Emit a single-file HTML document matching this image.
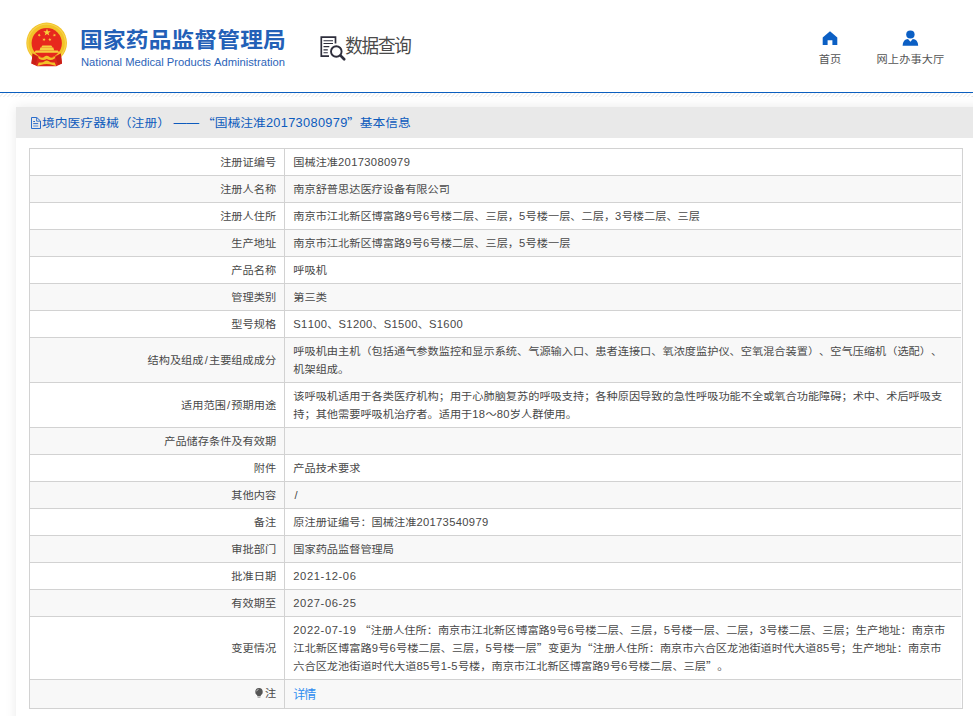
<!DOCTYPE html>
<html lang="zh-CN">
<head>
<meta charset="utf-8">
<title>国家药品监督管理局 数据查询</title>
<style>
*{box-sizing:border-box;margin:0;padding:0}
html,body{width:973px;height:716px;overflow:hidden;background:#fff}
body{text-spacing-trim:space-all;font-kerning:none;font-family:"Liberation Sans","Noto Sans CJK SC",sans-serif;color:#333;font-size:11.2px;position:relative}
.hdr{position:absolute;left:0;top:0;width:973px;height:92px;background:#fff}
.logo{position:absolute;left:25px;top:22px;width:44.5px;height:47.5px}
.t1{position:absolute;left:80px;top:22px;font-size:22.7px;font-weight:700;color:#2360b7;line-height:34px;white-space:nowrap;letter-spacing:.2px;transform:scaleY(.925);transform-origin:0 79%}
.t2{position:absolute;left:81px;top:54.5px;font-size:11.2px;color:#2c64b8;line-height:14px;white-space:nowrap}
.q{position:absolute;left:345.3px;top:34.5px;font-size:17.6px;color:#4a4a4a;line-height:24px;white-space:nowrap;letter-spacing:-1.3px;transform:scaleY(1.07);transform-origin:0 50%}
.qi{position:absolute;left:319.8px;top:35.8px;width:28px;height:26px}
.nav{position:absolute;top:51.4px;letter-spacing:.12px;font-size:11.2px;color:#555;line-height:16px;white-space:nowrap;text-align:center;transform:scaleY(.92);transform-origin:0 82%}
.ni{position:absolute}
.bl{position:absolute;left:0;top:92px;width:973px;height:1.4px;background:#0b5fbf}
.hatch{position:absolute;left:0;top:93.2px;width:973px;height:3.9px;
 background:repeating-linear-gradient(135deg,#fff 0,#fff 2.13px,#e4e4e4 2.13px,#e4e4e4 2.83px) -0.6px 0}
.panel{position:absolute;left:16px;top:107px;width:1000px;height:640px;background:#fff;box-shadow:0 0 11px rgba(0,0,0,.085)}
.ph{height:31px;background:#e9e9e9;color:#0d5bbd;font-size:12.8px;line-height:31px;padding-left:26px;white-space:nowrap;position:relative}
.ph .s2{display:inline-block;transform:scaleY(.93);transform-origin:50% 66%}
.ph .n{letter-spacing:.025em}
.ph .cq{margin-left:-.8px}
.ph svg{position:absolute;left:15px;top:10px}
table{position:absolute;left:13px;top:41px;width:934px;border-collapse:collapse;table-layout:fixed}
td{border:1px solid #d2d2d2;padding:4px 6px 4px 8.3px;line-height:18px;font-size:11.2px;vertical-align:middle;color:#484848}
td.k{width:255px;text-align:right;padding:4px 7.9px 4px 8px}
tr:last-child td.k .s{position:relative;top:-.8px}
tr:nth-child(even) td{background:#f8f8f8}
.cq{font-family:"Noto Sans CJK SC",sans-serif;line-height:0}
.sl{padding:0 1.2px}
.n{letter-spacing:.03em}
.d{letter-spacing:.053em}
.s{display:block;height:18px;white-space:nowrap;transform:scaleY(.9);transform-origin:50% 62%}
.bulb{display:inline-block;width:8px;height:11.4px;vertical-align:-1.5px;margin-right:2.4px}
a{color:#2d8cf0;text-decoration:none;font-size:12px;letter-spacing:-1px;line-height:20px;display:inline-block;position:relative;top:.8px}
</style>
</head>
<body>
<div class="hdr">
 <svg class="logo" viewBox="0 0 44 47">
  <circle cx="21.4" cy="20.7" r="20.1" fill="#f2c229"/>
  <circle cx="21.4" cy="20.7" r="18.6" fill="none" stroke="#f7d44a" stroke-width="1.2"/>
  <circle cx="21.5" cy="20.9" r="15" fill="#e7281d"/>
  <polygon points="21.75,6.40 22.67,9.04 25.46,9.09 23.23,10.78 24.04,13.46 21.75,11.86 19.46,13.46 20.27,10.78 18.04,9.09 20.83,9.04" fill="#f7d23c"/>
  <polygon points="14.70,11.36 14.68,12.61 15.85,13.06 14.65,13.43 14.58,14.68 13.86,13.66 12.65,13.98 13.40,12.98 12.72,11.92 13.91,12.33" fill="#f7d23c"/>
  <polygon points="28.45,11.36 29.24,12.33 30.43,11.92 29.75,12.98 30.50,13.98 29.29,13.66 28.57,14.68 28.50,13.43 27.30,13.06 28.47,12.61" fill="#f7d23c"/>
  <polygon points="19.00,15.68 19.20,16.91 20.43,17.16 19.32,17.73 19.47,18.97 18.58,18.09 17.44,18.62 18.01,17.50 17.15,16.58 18.39,16.77" fill="#f7d23c"/>
  <polygon points="24.35,15.68 24.96,16.77 26.20,16.58 25.34,17.50 25.91,18.62 24.77,18.09 23.88,18.97 24.03,17.73 22.92,17.16 24.15,16.91" fill="#f7d23c"/>
  <path d="M17.2 23.3 h8.8 l1.2 1.7 h-11.2 z M15.2 25.3 h12.8 l0.8 2.6 h-14.4 z M10.6 28.3 h21.8 l1.8 2.2 h-25.4 z" fill="#f6cf40"/>
  <path d="M7.6 31.2 Q21.5 39.5 35.4 31.2 L36.6 41 L31 43.8 H12 L6.3 41 Z" fill="#dc261c"/>
  <path d="M7.6 31.2 L6.3 41 L10.5 42.5 L12.5 35 Z M35.4 31.2 L36.6 41 L32.5 42.5 L30.5 35 Z" fill="#c91f17"/>
  <path d="M12.6 33.6 Q17 36.6 19 34.4 Q21.5 32.4 24 34.4 Q26 36.6 30.4 33.6 L29.2 36.4 Q25 38.8 21.5 36.6 Q18 38.8 13.8 36.4 Z" fill="#f2c229"/>
  <path d="M12.2 43.6 L13.6 40 Q17.6 40.6 19.4 38.8 Q21.5 37.4 23.6 38.8 Q25.4 40.6 29.4 40 L30.8 43.6 L27.5 42.6 Q21.5 40.4 15.5 42.6 Z" fill="#f2c229"/>
 </svg>
 <div class="t1">国家药品监督管理局</div>
 <div class="t2">National Medical Products Administration</div>
 <svg class="qi" viewBox="0 0 28 26" fill="none" stroke="#2e2e3c" stroke-width="1.7">
  <path d="M9 20.2 H1.3 V1.1 H15.5 V7.6"/>
  <path d="M3.5 4.7 H13 M3.5 7.5 H13 M3.5 10.6 H9.3 M3.5 13.8 H7.8 M3.5 16.7 H7.8" stroke-width="1.15"/>
  <circle cx="16.3" cy="15.5" r="5.3" stroke-width="1.9"/>
  <path d="M20.6 19.6 L24.2 23.3" stroke-width="2.7" stroke-linecap="round"/>
 </svg>
 <div class="q">数据查询</div>

 <svg class="ni" style="left:822px;top:30.5px" width="16" height="14.5" viewBox="0 0 16 15" preserveAspectRatio="none">
  <path d="M8 0.3 L15.3 6.8 V14.8 H10.4 V9.6 H5.6 V14.8 H0.7 V6.8 Z" fill="#0b5fc4"/>
 </svg>
 <div class="nav" style="left:800px;width:60px">首页</div>
 <svg class="ni" style="left:902px;top:29.7px" width="17" height="16.3" viewBox="0 0 17 17" preserveAspectRatio="none">
  <circle cx="8.4" cy="4.6" r="4.2" fill="#0b5fc4"/>
  <path d="M0.6 16.4 Q1 9.6 6 9.4 L8.4 12.3 L10.8 9.4 Q15.8 9.6 16.2 16.4 Z" fill="#0b5fc4"/>
 </svg>
 <div class="nav" style="left:870px;width:81px">网上办事大厅</div>
</div>
<div class="bl"></div>
<div class="hatch"></div>

<div class="panel">
 <div class="ph">
  <svg width="10" height="12" viewBox="0 0 10 12" fill="none" stroke="#2a6dcc" stroke-width="1"><path d="M0.5 0.5 H5.8 L9.5 4 V11.5 H0.5 Z"/><path d="M5.6 0.8 V4.2 H9.2" stroke-width=".9"/><path d="M2.2 4.5 H4 M2.2 6.6 H7.2"/><path d="M2.2 9 H7.2" stroke-width="1.6" stroke="#8fb0e0"/></svg>
  <span class="s2">境内医疗器械（注册） —— <span class="cq">“</span>国械注准<span class="n">20173080979</span><span class="cq">”</span>基本信息</span>
 </div>
 <table>
  <tr><td class="k"><span class="s">注册证编号</span></td><td><span class="s">国械注准<span class="n">20173080979</span></span></td></tr>
  <tr><td class="k"><span class="s">注册人名称</span></td><td><span class="s">南京舒普思达医疗设备有限公司</span></td></tr>
  <tr><td class="k"><span class="s">注册人住所</span></td><td><span class="s">南京市江北新区博富路<span class="n">9</span>号<span class="n">6</span>号楼二层、三层，<span class="n">5</span>号楼一层、二层，<span class="n">3</span>号楼二层、三层</span></td></tr>
  <tr><td class="k"><span class="s">生产地址</span></td><td><span class="s">南京市江北新区博富路<span class="n">9</span>号<span class="n">6</span>号楼二层、三层，<span class="n">5</span>号楼一层</span></td></tr>
  <tr><td class="k"><span class="s">产品名称</span></td><td><span class="s">呼吸机</span></td></tr>
  <tr><td class="k"><span class="s">管理类别</span></td><td><span class="s">第三类</span></td></tr>
  <tr><td class="k"><span class="s">型号规格</span></td><td><span class="s"><span class="n">S1100</span>、<span class="n">S1200</span>、<span class="n">S1500</span>、<span class="n">S1600</span></span></td></tr>
  <tr><td class="k"><span class="s">结构及组成<span class="sl">/</span>主要组成成分</span></td><td><span class="s">呼吸机由主机（包括通气参数监控和显示系统、气源输入口、患者连接口、氧浓度监护仪、空氧混合装置）、空气压缩机（选配）、</span><span class="s">机架组成。</span></td></tr>
  <tr><td class="k"><span class="s">适用范围<span class="sl">/</span>预期用途</span></td><td><span class="s">该呼吸机适用于各类医疗机构；用于心肺脑复苏的呼吸支持；各种原因导致的急性呼吸功能不全或氧合功能障碍；术中、术后呼吸支</span><span class="s">持；其他需要呼吸机治疗者。适用于<span class="n">18</span>～<span class="n">80</span>岁人群使用。</span></td></tr>
  <tr><td class="k"><span class="s">产品储存条件及有效期</span></td><td><span class="s"></span></td></tr>
  <tr><td class="k"><span class="s">附件</span></td><td><span class="s">产品技术要求</span></td></tr>
  <tr><td class="k"><span class="s">其他内容</span></td><td><span class="s"><span class="sl">/</span></span></td></tr>
  <tr><td class="k"><span class="s">备注</span></td><td><span class="s">原注册证编号：国械注准<span class="n">20173540979</span></span></td></tr>
  <tr><td class="k"><span class="s">审批部门</span></td><td><span class="s">国家药品监督管理局</span></td></tr>
  <tr><td class="k"><span class="s">批准日期</span></td><td><span class="s"><span class="n d">2021-12-06</span></span></td></tr>
  <tr><td class="k"><span class="s">有效期至</span></td><td><span class="s"><span class="n d">2027-06-25</span></span></td></tr>
  <tr><td class="k"><span class="s">变更情况</span></td><td><span class="s"><span class="n d">2022-07-19</span> <span class="cq">“</span>注册人住所：南京市江北新区博富路<span class="n">9</span>号<span class="n">6</span>号楼二层、三层，<span class="n">5</span>号楼一层、二层，<span class="n">3</span>号楼二层、三层；生产地址：南京市</span><span class="s">江北新区博富路<span class="n">9</span>号<span class="n">6</span>号楼二层、三层，<span class="n">5</span>号楼一层<span class="cq">”</span>变更为<span class="cq">“</span>注册人住所：南京市六合区龙池街道时代大道<span class="n">85</span>号；生产地址：南京市</span><span class="s">六合区龙池街道时代大道<span class="n">85</span>号<span class="n">1-5</span>号楼，南京市江北新区博富路<span class="n">9</span>号<span class="n">6</span>号楼二层、三层<span class="cq">”</span>。</span></td></tr>
  <tr><td class="k"><span class="s"><svg class="bulb" viewBox="0 0 8 10" preserveAspectRatio="none"><circle cx="4" cy="3.8" r="3.7" fill="#555"/><path d="M2.2 6.2 H5.8 V8.2 H2.2 Z" fill="#555"/><path d="M2.6 8.8 H5.4 V9.6 H2.6 Z" fill="#999"/><path d="M1.6 3.4 A2.4 2.4 0 0 1 3.6 1.5" stroke="#ddd" stroke-width=".7" fill="none"/></svg>注</span></td><td><a>详情</a></td></tr>
 </table>
 <div style="position:absolute;left:945px;top:42px;width:1px;height:559px;background:#fdfdff"></div>
</div>
</body>
</html>
